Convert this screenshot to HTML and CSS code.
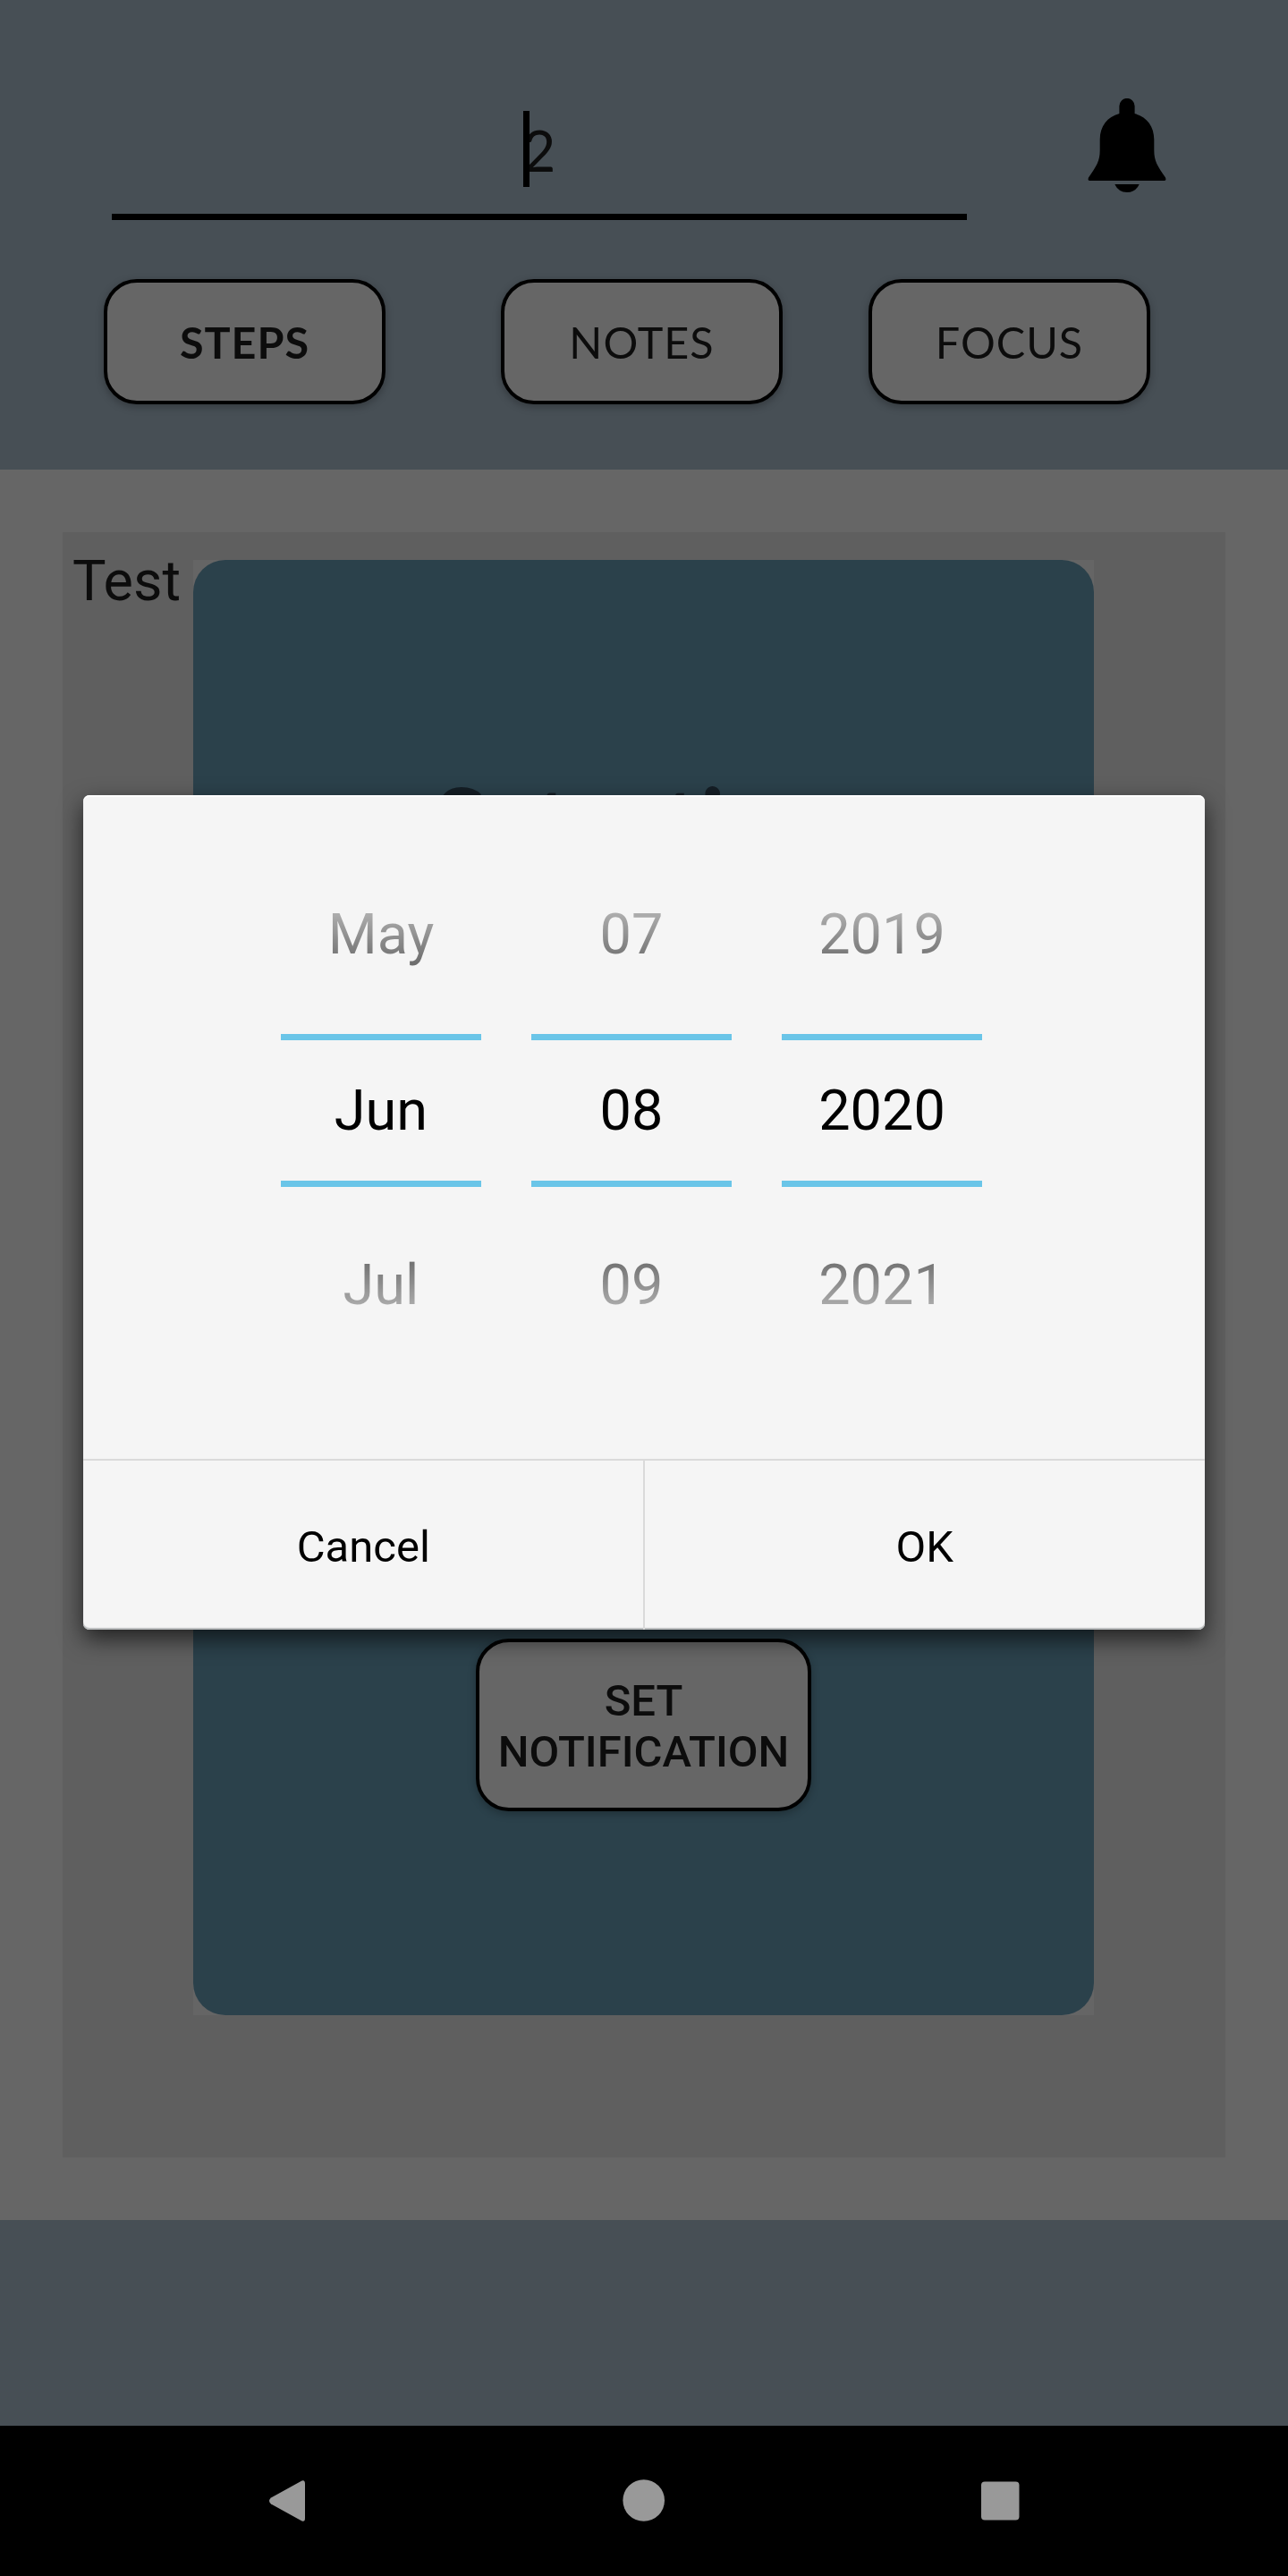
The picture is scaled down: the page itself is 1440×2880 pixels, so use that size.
FILE: index.html
```html
<!DOCTYPE html>
<html lang="en">
<head>
<meta charset="utf-8">
<title>Steps</title>
<link rel="stylesheet" href="styles.css">
</head>
<body>
<div class="screen">
  <header class="header">
    <div class="title-row">
      <div class="title-field"><span class="title-value">2<i class="cursor"></i></span></div>
      <svg class="bell" viewBox="0 0 88 106" width="88" height="106">
        <path d="M35.4 17V8.5a8.6 8.6 0 0 1 17.200 0V17C66 20.500 74.300 31 74.300 46V58C74.300 70 78 75.500 87 88.500Q88.200 92 86 92H2Q-.2 92 1 88.500C10 75.500 13.700 70 13.700 58V46C13.700 31 22 20.500 35.400 17Z"/>
        <path d="M30.300 96H57.700Q53.500 105 44 105T30.300 96Z"/>
      </svg>
    </div>
    <nav class="tabs">
      <button class="btn tab active"><span>STEPS</span></button>
      <button class="btn tab"><span>NOTES</span></button>
      <button class="btn tab"><span>FOCUS</span></button>
    </nav>
  </header>
  <main class="main">
    <section class="panel">
      <div class="label">Test</div>
      <div class="card-wrap">
        <div class="card">
          <h1 class="card-title">Set a time</h1>
          <button class="btn notify">SET<br>NOTIFICATION</button>
        </div>
      </div>
    </section>
  </main>
  <footer class="footer"></footer>
  <div class="navbar">
    <svg width="1440" height="168" viewBox="0 0 1440 168" fill="#999">
      <path d="M337.500 61.500Q341 60 341 65V103Q341 108 337.500 106.500L303 87.500Q299 84 303 80.500Z"/>
      <circle cx="719.700" cy="83.500" r="23.300"/>
      <rect x="1097" y="62.500" width="42.500" height="43" rx="4"/>
    </svg>
  </div>
  <div class="dialog">
    <div class="picker">
      <div class="column">
        <div class="row prev">May</div><div class="row current">Jun</div><div class="row next">Jul</div>
      </div>
      <div class="column">
        <div class="row prev">07</div><div class="row current">08</div><div class="row next">09</div>
      </div>
      <div class="column">
        <div class="row prev">2019</div><div class="row current">2020</div><div class="row next">2021</div>
      </div>
    </div>
    <div class="actions">
      <button class="action">Cancel</button>
      <button class="action">OK</button>
    </div>
  </div>
</div>
</body>
</html>
```
FILE: styles.css
```css
* { box-sizing: border-box; }
body { margin: 0; font-family: Roboto, sans-serif; color: #0c0c0c; background: #666; }
button { margin: 0; padding: 0; background: none; border: 0; font: inherit; color: inherit; }

.screen { position: relative; display: flex; flex-direction: column; width: 1440px; height: 2880px; overflow: hidden; }

.header { height: 525px; background: #474f55; padding-top: 110px; }
.title-row { display: flex; align-items: flex-start; padding-left: 125px; gap: 135px; }
.title-field { width: 956px; height: 136px; border-bottom: 7px solid #000; text-align: center; font: 63px/116px Lato, sans-serif; }
.title-value { position: relative; display: inline-block; }
.cursor { position: absolute; left: 0; top: 14px; width: 7px; height: 85px; background: #000; }
.bell { display: block; fill: #000; }

.btn { display: flex; align-items: center; justify-content: center; border: 4px solid #000; border-radius: 37px; background: #666; box-shadow: 0 3px 10px rgba(0, 0, 0, .28); }
.tabs { display: flex; padding: 66px 0 0 116px; }
.tab { width: 315px; height: 140px; font: 48.500px/60px Lato, sans-serif; letter-spacing: 1px; }
.tab:nth-child(2) { margin: 0 96px 0 129px; }
.tab.active { font-weight: 700; }

.main { height: 1957px; padding: 70px; background: #666; }
.panel { display: flex; align-items: flex-start; height: 1817px; padding-top: 31px; background: #5f5f5f; }
.label { width: 146px; padding-left: 11px; margin-top: -13px; font-size: 63px; line-height: 74px; }
.card-wrap { background: #656565; }
.card { display: flex; flex-direction: column; align-items: center; width: 1007px; height: 1627px; border-radius: 36px; background: #2b414b; padding-top: 227px; }
.card-title { margin: 0; height: 979px; font: 700 105px/126px Lato, sans-serif; color: #151e25; }
.notify { width: 375px; height: 193px; font-size: 49px; font-weight: 500; line-height: 57px; padding-top: 3px; }

.footer { height: 230px; background: #474f55; }
.navbar { height: 168px; background: #000; }
.navbar svg { display: block; }

.dialog {
  position: absolute; left: 93px; top: 889px; width: 1254px; height: 933px;
  display: flex; flex-direction: column; border-radius: 7px; background: #f5f5f5; color: #000;
  box-shadow: inset 0 2px 0 #fff, inset 0 -2px 1px #b8bbbc, 0 10px 26px rgba(0, 0, 0, .65);
}
.picker { display: flex; gap: 56px; height: 742px; padding: 58px 0 0 221px; }
.column { width: 224px; text-align: center; font-size: 63px; }
.row { height: 196px; line-height: 196px; }
.row.current { height: 171px; margin: 13px 0 12px; line-height: 157px; border: solid #6ac5e8; border-width: 7px 0; }
.row.prev { -webkit-mask-image: linear-gradient(to bottom, transparent 12px, #000 225px); mask-image: linear-gradient(to bottom, transparent 12px, #000 225px); }
.row.next { -webkit-mask-image: linear-gradient(to bottom, #000 -28px, transparent 186px); mask-image: linear-gradient(to bottom, #000 -28px, transparent 186px); }
.actions { display: flex; height: 191px; border-top: 2px solid #dadada; }
.action { flex: 1; font-size: 49px; line-height: 60px; padding-top: 4px; }
.action + .action { border-left: 2px solid #dadada; margin-left: -1px; }
```
